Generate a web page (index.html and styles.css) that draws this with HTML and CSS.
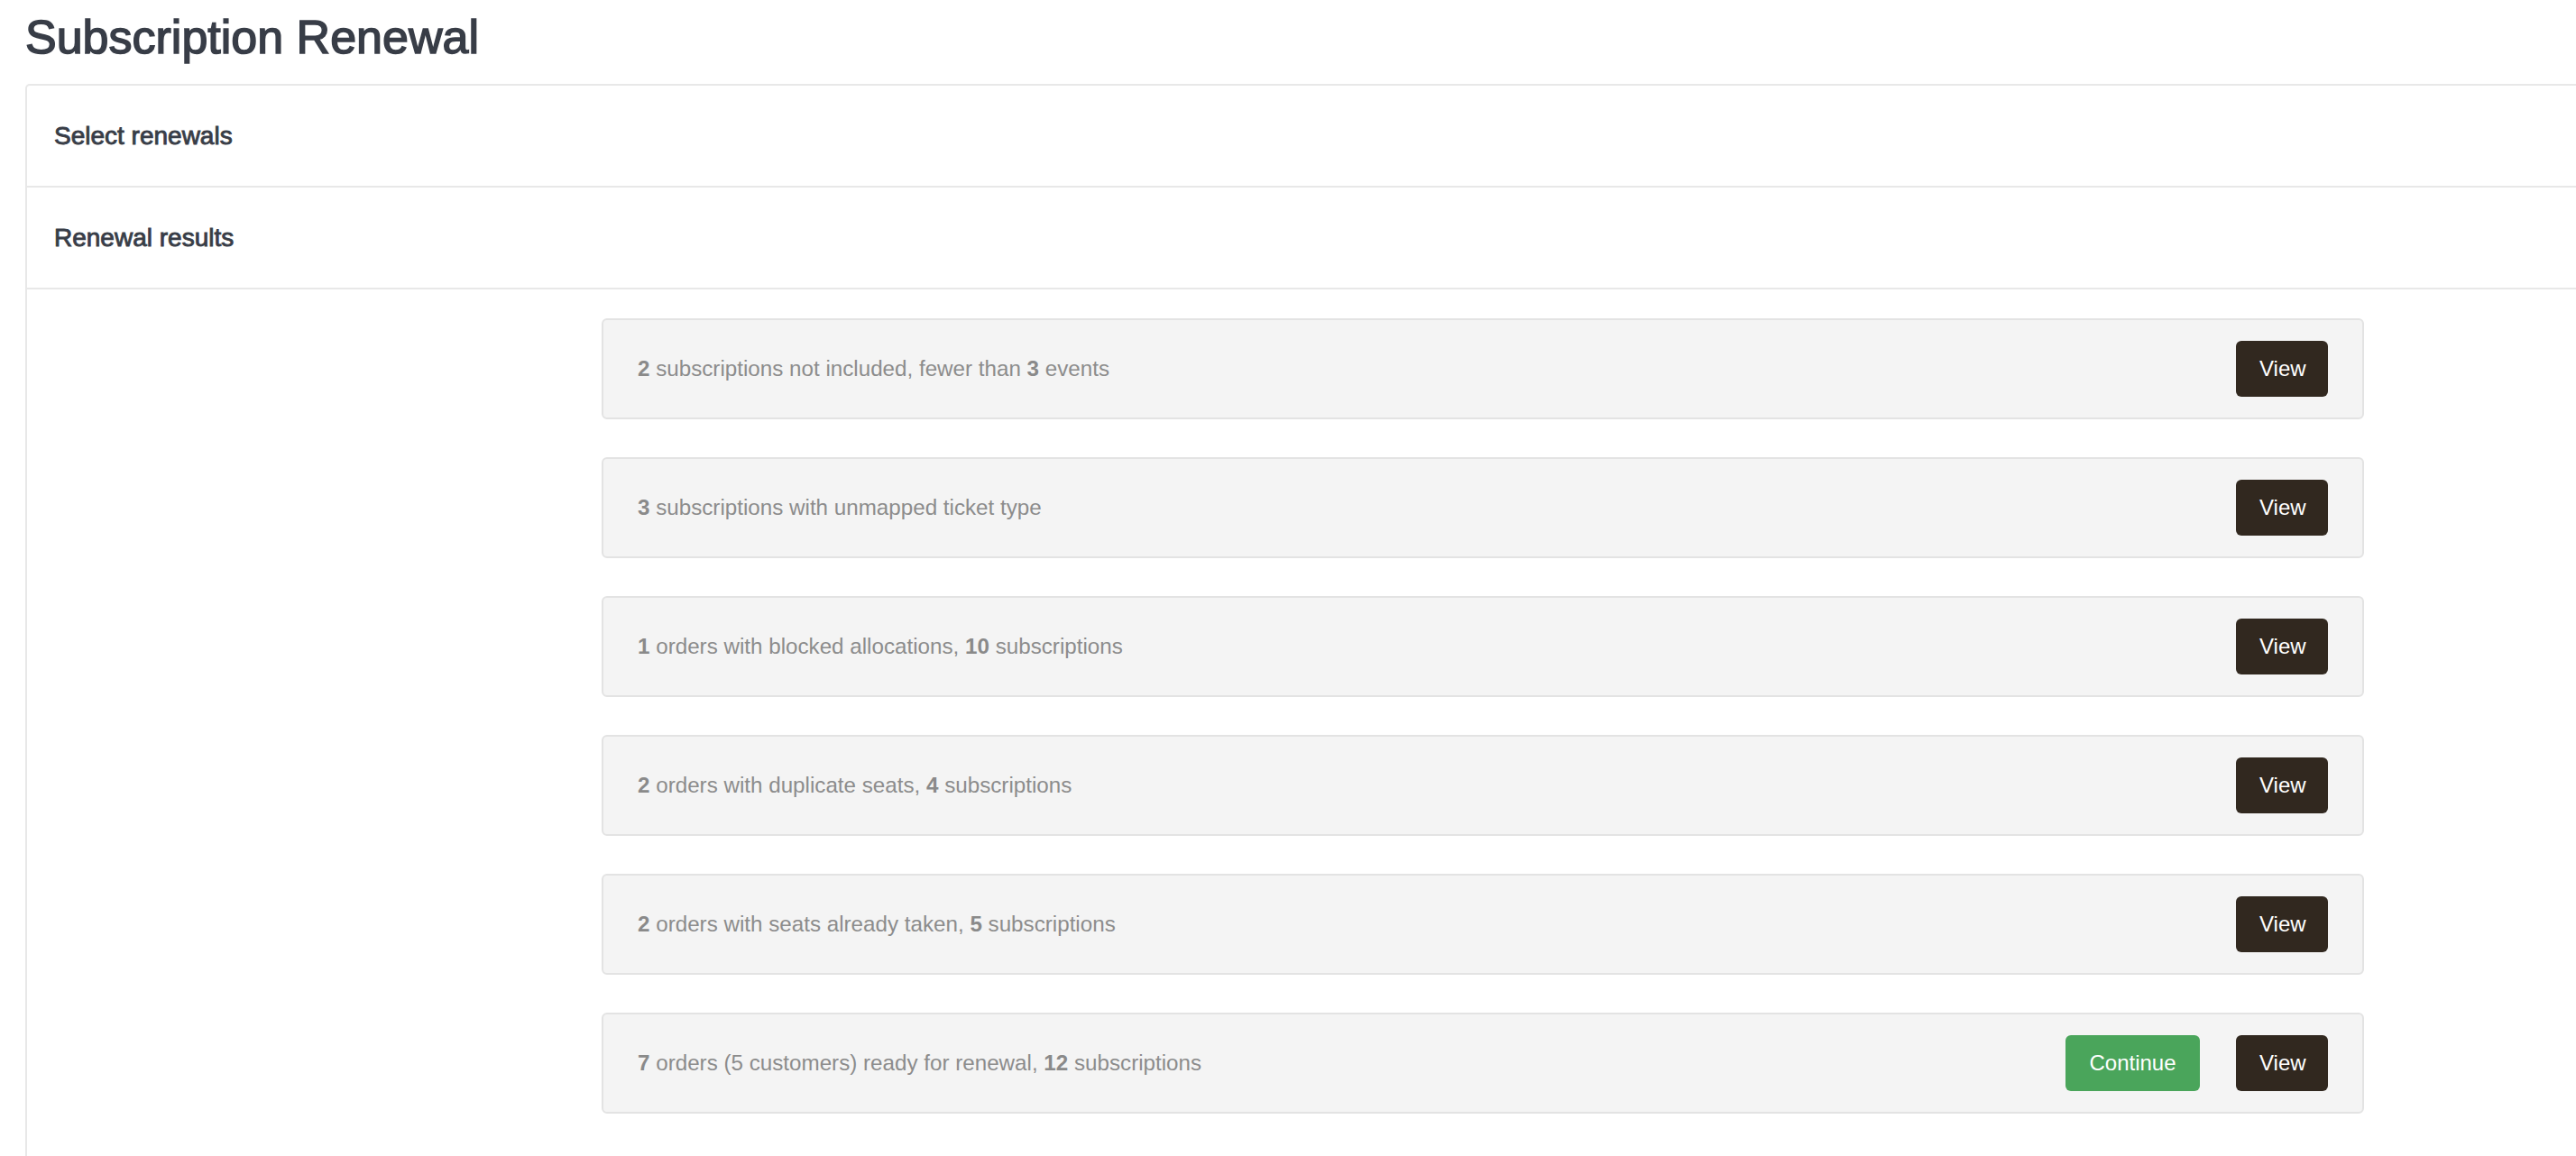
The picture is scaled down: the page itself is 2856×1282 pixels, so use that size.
FILE: index.html
```html
<!DOCTYPE html>
<html lang="en">
<head>
<meta charset="utf-8">
<title>Subscription Renewal</title>
<link rel="stylesheet" href="styles.css">
</head>
<body>
<div class="page">
  <h1 class="page-title">Subscription Renewal</h1>
  <div class="panel">
    <div class="panel-section">
      <h2 class="panel-heading">Select renewals</h2>
    </div>
    <div class="panel-section">
      <h2 class="panel-heading">Renewal results</h2>
    </div>
    <div class="results">
      <div class="result-list">
        <div class="result">
          <p class="result-text"><b>2</b> subscriptions not included, fewer than <b>3</b> events</p>
          <div class="result-actions">
            <button class="btn btn-dark">View</button>
          </div>
        </div>
        <div class="result">
          <p class="result-text"><b>3</b> subscriptions with unmapped ticket type</p>
          <div class="result-actions">
            <button class="btn btn-dark">View</button>
          </div>
        </div>
        <div class="result">
          <p class="result-text"><b>1</b> orders with blocked allocations, <b>10</b> subscriptions</p>
          <div class="result-actions">
            <button class="btn btn-dark">View</button>
          </div>
        </div>
        <div class="result">
          <p class="result-text"><b>2</b> orders with duplicate seats, <b>4</b> subscriptions</p>
          <div class="result-actions">
            <button class="btn btn-dark">View</button>
          </div>
        </div>
        <div class="result">
          <p class="result-text"><b>2</b> orders with seats already taken, <b>5</b> subscriptions</p>
          <div class="result-actions">
            <button class="btn btn-dark">View</button>
          </div>
        </div>
        <div class="result">
          <p class="result-text"><b>7</b> orders (5 customers) ready for renewal, <b>12</b> subscriptions</p>
          <div class="result-actions">
            <button class="btn btn-green">Continue</button>
            <button class="btn btn-dark">View</button>
          </div>
        </div>
      </div>
    </div>
  </div>
</div>
</body>
</html>
```
FILE: styles.css
```css
html, body {
  margin: 0;
  padding: 0;
  overflow: hidden;
  background: #ffffff;
}

body {
  font-family: "Liberation Sans", Arial, sans-serif;
  color: #383d47;
}

.page {
  padding: 13px 0 0 28px;
}

.page-title {
  margin: 0 0 23px 0;
  font-size: 52px;
  line-height: 57px;
  font-weight: 400;
  color: #383d47;
  -webkit-text-stroke: 1.5px #383d47;
}

/* Panel runs past the right edge of the window */
.panel {
  margin-right: -12px;
  border: 2px solid #e8e8e8;
  border-bottom: none;
  border-radius: 5px 5px 0 0;
  min-height: 1200px;
}

.panel-section {
  height: 111px;
  display: flex;
  align-items: center;
  padding-left: 30px;
  border-bottom: 2px solid #e8e8e8;
}

.panel-heading {
  margin: 0;
  font-size: 28px;
  font-weight: 400;
  color: #383d47;
  -webkit-text-stroke: 0.9px #383d47;
}

.results {
  padding: 32px 0 0 637px;
}

.result-list {
  width: 1954px;
  display: flex;
  flex-direction: column;
  gap: 42px;
}

.result {
  box-sizing: border-box;
  height: 112px;
  display: flex;
  align-items: center;
  justify-content: space-between;
  padding: 0 38px;
  background: #f4f4f4;
  border: 2px solid #e3e3e3;
  border-radius: 6px;
}

.result-text {
  margin: 0;
  font-size: 24.2px;
  color: #8c8c8c;
}

.result-text b {
  font-weight: 700;
  color: #8a8a8a;
}

.result-actions {
  display: flex;
  gap: 40px;
}

.btn {
  box-sizing: border-box;
  height: 62px;
  padding: 0 26px;
  border: none;
  border-radius: 6px;
  font-family: "Liberation Sans", Arial, sans-serif;
  font-size: 24px;
  color: #ffffff;
  cursor: pointer;
}

.btn-dark {
  width: 102px;
  background: #31281f;
}

.btn-green {
  width: 149px;
  background: #4aa55b;
}
```
